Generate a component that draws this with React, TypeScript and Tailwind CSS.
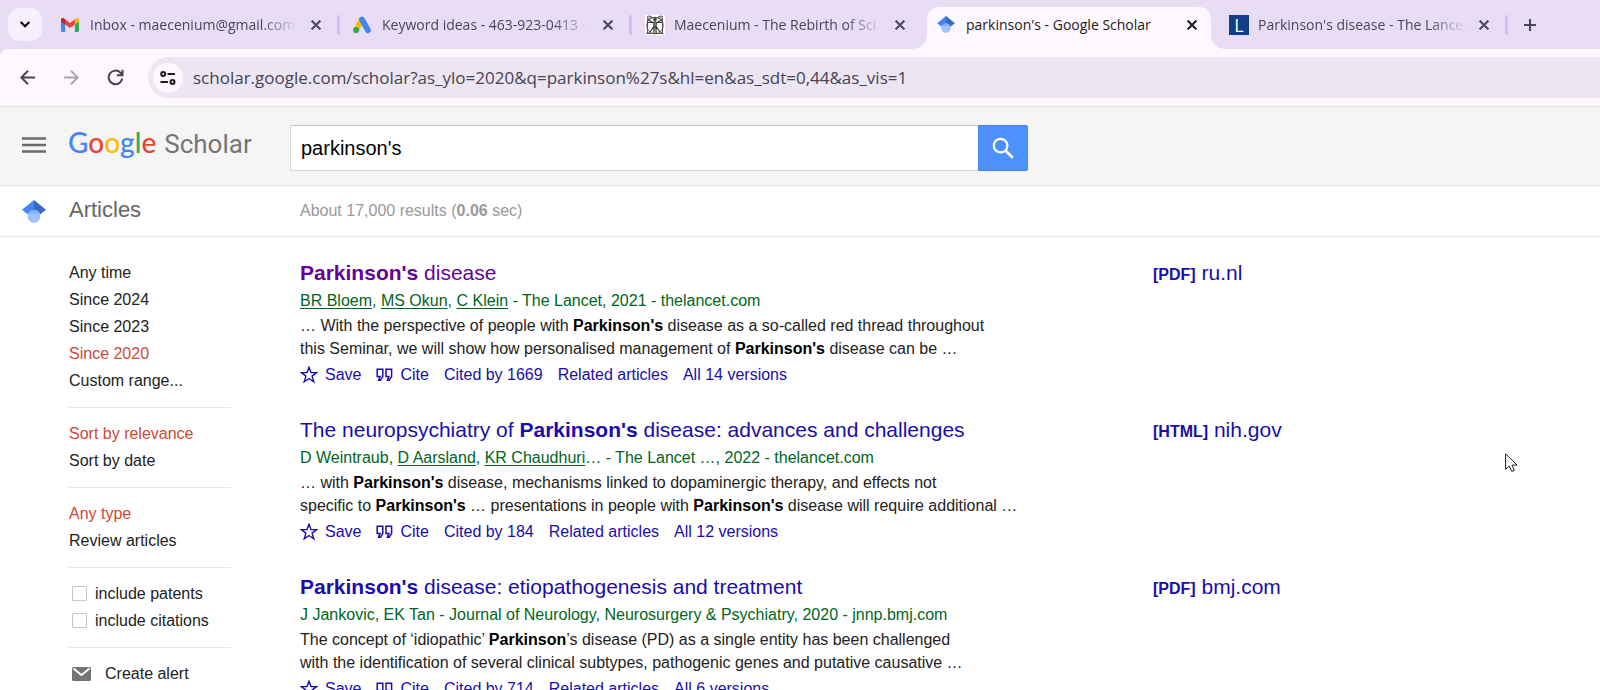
import { useState } from "react";
import type { ReactNode } from "react";

type Tab = {
    title: string;
    icon: ReactNode;
    active?: boolean;
    separator?: boolean;
};

type Result = {
    title: ReactNode;
    visited?: boolean;
    meta: ReactNode;
    snippet: ReactNode;
    cited: number;
    versions: number;
    format: string;
    host: string;
};

function GmailIcon() {
    return (
        <svg viewBox="0 0 18 14" className="w-[18px] h-[14px]">
            <path d="M0 2.2V12.6C0 13.4.6 14 1.3 14H4.1V6.1L2 2z" fill="#4285f4" />
            <path d="M18 2.2V12.6c0 .8-.6 1.4-1.3 1.4h-2.8V6.1L16 2z" fill="#34a853" />
            <path d="M13.9 1.3v5.1L18 3.3V1.9C18 .2 16.1-.5 14.9.5z" fill="#fbbc04" />
            <path d="M4.1 6.4V1.3L9 5l4.9-3.7v5.1L9 10.1z" fill="#ea4335" />
            <path d="M0 1.9v1.4l4.1 3.1V1.3L3.1.5C1.9-.5 0 .2 0 1.9z" fill="#c5221f" />
        </svg>
    );
}

function AdsIcon() {
    return (
        <svg viewBox="0 0 18 18" className="w-[18px] h-[18px]">
            <path d="M3.2 14L8.6 4.2" stroke="#fbbc04" strokeWidth="5.6" />
            <path d="M9 3.6l6 10.6" stroke="#4285f4" strokeWidth="5.8" strokeLinecap="round" />
            <circle cx="3.1" cy="14" r="3.1" fill="#34a853" />
        </svg>
    );
}

function VitruvianIcon() {
    return (
        <svg viewBox="0 0 20 20" className="w-5 h-5 bg-white" fill="none" stroke="#3c3c3c">
            <rect x="2.5" y="3" width="15" height="15.5" strokeWidth=".8" />
            <circle cx="10" cy="10.5" r="8.3" strokeWidth=".8" />
            <path d="M2 2c2-1.6 4-.8 5 .3M18 2c-2-1.6-4-.8-5 .3M1.5 18.5l3-1M18.5 18.5l-3-1" strokeWidth="1" />
            <circle cx="10" cy="4.8" r="1.3" fill="#3c3c3c" />
            <path d="M2.5 7.5H17.5M3 4.5l5.5 3.5M17 4.5l-5.5 3.5" strokeWidth="1.2" />
            <path d="M8.4 7h3.2l-.4 5H8.8z" fill="#777" strokeWidth=".8" />
            <path d="M9.2 11.5l-.4 6.5M10.8 11.5l.4 6.5M8.8 11.5L5 17M11.2 11.5L15 17" strokeWidth="1.3" />
        </svg>
    );
}

function ScholarIcon({ className }: { className: string }) {
    return (
        <svg viewBox="0 0 24 23" className={className}>
            <path d="M12 0L0 9.8l6 4.7h6z" fill="#4285f4" />
            <path d="M12 0l12 9.8-6 4.7h-6z" fill="#356ac3" />
            <circle cx="12" cy="16.4" r="6.4" fill="#a0c3ff" />
            <path d="M6.3 13.5a6.4 6.4 0 0 1 11.4 0z" fill="#82b1ff" />
        </svg>
    );
}

function LancetIcon() {
    return (
        <span className="w-5 h-5 bg-[#123f87] text-white text-lg font-medium leading-5 text-center font-['Open_Sans',sans-serif]">L</span>
    );
}

function CloseIcon() {
    return (
        <svg viewBox="0 0 10 10" className="w-[10px] h-[10px]" stroke="currentColor" strokeWidth="2">
            <path d="M.6.6l8.8 8.8M9.4.6L.6 9.4" />
        </svg>
    );
}

function StarIcon() {
    return (
        <svg viewBox="0 0 18 18" className="w-[18px] h-[18px]" fill="none" stroke="currentColor" strokeWidth="1.4">
            <path d="M9 1.2l2 5.4h5.6l-4.5 3.5 1.7 5.7L9 12.5l-4.8 3.3 1.7-5.7L1.4 6.6H7z" />
        </svg>
    );
}

function QuoteIcon() {
    return (
        <svg viewBox="0 0 17 14" className="w-[17px] h-[14px]" fill="none" stroke="currentColor" strokeWidth="1.5">
            <path d="M1.2 1.2h5.6v7.4L4.4 12.2H2.6l1.5-3.8H1.2z" />
            <path d="M10 1.2h5.6v7.4l-2.4 3.6h-1.8l1.5-3.8H10z" />
        </svg>
    );
}

const tabs: Tab[] = [
    { title: "Inbox - maecenium@gmail.com", icon: <GmailIcon />, separator: true },
    { title: "Keyword ideas - 463-923-0413 -", icon: <AdsIcon />, separator: true },
    { title: "Maecenium - The Rebirth of Sci", icon: <VitruvianIcon /> },
    { title: "parkinson's - Google Scholar", icon: <ScholarIcon className="w-[18px] h-[17px]" />, active: true },
    { title: "Parkinson's disease - The Lancet", icon: <LancetIcon />, separator: true },
];

const filters = [
    { items: ["Any time", "Since 2024", "Since 2023", "Since 2020", "Custom range..."], selected: "Since 2020" },
    { items: ["Sort by relevance", "Sort by date"], selected: "Sort by relevance" },
    { items: ["Any type", "Review articles"], selected: "Any type" },
];

const results: Result[] = [
    {
        title: <><b>Parkinson's</b> disease</>,
        visited: true,
        meta: <><Author>BR Bloem</Author>, <Author>MS Okun</Author>, <Author>C Klein</Author> - The Lancet, 2021 - thelancet.com</>,
        snippet: <>… With the perspective of people with <B>Parkinson's</B> disease as a so-called red thread throughout<br />this Seminar, we will show how personalised management of <B>Parkinson's</B> disease can be …</>,
        cited: 1669,
        versions: 14,
        format: "[PDF]",
        host: "ru.nl",
    },
    {
        title: <>The neuropsychiatry of <b>Parkinson's</b> disease: advances and challenges</>,
        meta: <>D Weintraub, <Author>D Aarsland</Author>, <Author>KR Chaudhuri</Author>… - The Lancet …, 2022 - thelancet.com</>,
        snippet: <>… with <B>Parkinson's</B> disease, mechanisms linked to dopaminergic therapy, and effects not<br />specific to <B>Parkinson's</B> … presentations in people with <B>Parkinson's</B> disease will require additional …</>,
        cited: 184,
        versions: 12,
        format: "[HTML]",
        host: "nih.gov",
    },
    {
        title: <><b>Parkinson's</b> disease: etiopathogenesis and treatment</>,
        meta: <>J Jankovic, EK Tan - Journal of Neurology, Neurosurgery &amp; Psychiatry, 2020 - jnnp.bmj.com</>,
        snippet: <>The concept of ‘idiopathic’ <B>Parkinson</B>’s disease (PD) as a single entity has been challenged<br />with the identification of several clinical subtypes, pathogenic genes and putative causative …</>,
        cited: 714,
        versions: 6,
        format: "[PDF]",
        host: "bmj.com",
    },
];

function Author({ children }: { children: ReactNode }) {
    return <a href="#" className="underline underline-offset-2">{children}</a>;
}

function B({ children }: { children: ReactNode }) {
    return <b className="text-black">{children}</b>;
}

function TabStrip() {
    return (
        <div className="flex items-center shrink-0 h-[49px] bg-[#e9ddf5] text-[#4a4459] font-['Open_Sans',sans-serif]">
            <button aria-label="Search tabs" className="flex items-center justify-center shrink-0 w-[34px] h-[33px] ml-2 mr-1.5 rounded-xl bg-[#f8f0fe] text-black">
                <svg viewBox="0 0 10 7" className="w-[10px] h-[7px]" fill="none" stroke="currentColor" strokeWidth="2"><path d="M.7 1l4.3 4.3L9.3 1" /></svg>
            </button>
            {tabs.map((tab) => (
                <div key={tab.title} className={`relative flex shrink-0 items-center w-[292px] pl-[13px] ${tab.active ? "h-[42px] self-end pb-[7px] text-[#1d1b20]" : "h-[49px]"}`}>
                    {tab.active && (
                        <svg viewBox="0 0 314 42" className="absolute -left-3 bottom-0 w-[314px] h-[42px]" fill="#fdf7ff">
                            <path d="M0 42C9 42 15 36 15 27V12C15 5 20 0 27 0H287c7 0 12 5 12 12V27c0 9 6 15 15 15z" />
                        </svg>
                    )}
                    <span className="relative flex items-center justify-start w-[29px]">{tab.icon}</span>
                    <span className={`relative w-[208px] overflow-hidden whitespace-nowrap text-sm ${tab.active ? "" : "[mask-image:linear-gradient(to_right,black_82%,transparent)]"}`}>{tab.title}</span>
                    <button aria-label="Close tab" className="relative flex items-center justify-center w-5 h-5 ml-2"><CloseIcon /></button>
                    {tab.separator && <span className="w-[3px] h-5 ml-auto rounded-full bg-[#d3bcff]" />}
                </div>
            ))}
            <button aria-label="New tab" className="flex items-center justify-center w-8 h-8 ml-1.5">
                <svg viewBox="0 0 12 12" className="w-3 h-3" stroke="currentColor" strokeWidth="2"><path d="M6 0v12M0 6h12" /></svg>
            </button>
        </div>
    );
}

function Toolbar() {
    return (
        <div className="shrink-0 bg-[#e9ddf5]">
            <div className="flex items-center h-[58px] rounded-tl-lg border-b border-[#e4dfe7] bg-[#fdf7ff] text-[#474254] font-['Open_Sans',sans-serif]">
                <button aria-label="Back" className="ml-5">
                    <svg viewBox="0 0 15 15" className="w-[15px] h-[15px]" fill="none" stroke="currentColor" strokeWidth="2"><path d="M15 7.5H1.5M8 .8L1.3 7.5 8 14.2" /></svg>
                </button>
                <button aria-label="Forward" className="ml-[29px] text-[#aaa5ae]">
                    <svg viewBox="0 0 15 15" className="w-[15px] h-[15px]" fill="none" stroke="currentColor" strokeWidth="2"><path d="M0 7.5h13.5M7 .8l6.7 6.7L7 14.2" /></svg>
                </button>
                <button aria-label="Reload" className="ml-[28px]">
                    <svg viewBox="0 0 17 17" className="w-[17px] h-[17px]" fill="none" stroke="currentColor" strokeWidth="2"><path d="M15.2 9.5A6.8 6.8 0 1 1 13.4 3.7L15 5.6M15.5.8v5.4h-5.6" /></svg>
                </button>
                <div className="flex flex-1 items-center h-[41px] ml-6 pl-[5px] rounded-l-full bg-[#ebe6f1]">
                    <button aria-label="View site information" className="flex items-center justify-center w-[30px] h-[30px] rounded-full bg-[#fdf7ff] text-[#1d1b20]">
                        <svg viewBox="0 0 16 14" className="w-4 h-[14px]" fill="none" stroke="currentColor" strokeWidth="2">
                            <circle cx="3.2" cy="3" r="2" />
                            <path d="M7.5 3H15M.5 11H8" />
                            <circle cx="12.5" cy="11" r="2" />
                        </svg>
                    </button>
                    <input aria-label="Address" className="flex-1 ml-[10px] bg-transparent text-[17px] outline-none" defaultValue="scholar.google.com/scholar?as_ylo=2020&q=parkinson%27s&hl=en&as_sdt=0,44&as_vis=1" />
                </div>
            </div>
        </div>
    );
}

function Header() {
    const [query, setQuery] = useState("parkinson's");

    return (
        <header className="flex items-start shrink-0 h-[79px] pt-[18px] bg-[#f5f5f5] border-b border-[#e5e5e5]">
            <div className="flex items-center w-[290px] h-10 pl-[22px]">
                <button aria-label="Menu">
                    <svg viewBox="0 0 24 16" className="w-6 h-4" stroke="#6b6b6b" strokeWidth="2.4"><path d="M0 1.5h24M0 8h24M0 14.5h24" /></svg>
                </button>
                <a href="#" className="flex items-baseline mb-1 ml-[22px] gap-2">
                    <span className="font-['Lato',sans-serif] font-medium text-[28px] leading-8">
                        <span className="text-[#4285f4]">G</span>
                        <span className="text-[#ea4335]">o</span>
                        <span className="text-[#fbbc05]">o</span>
                        <span className="text-[#4285f4]">g</span>
                        <span className="text-[#34a853]">l</span>
                        <span className="text-[#ea4335]">e</span>
                    </span>
                    <span className="font-['Roboto',sans-serif] text-[26px] leading-8 text-[#757575]">Scholar</span>
                </a>
            </div>
            <form className="flex w-[738px] h-[46px]" onSubmit={(e) => e.preventDefault()}>
                <input
                    aria-label="Search"
                    className="flex-1 min-w-0 pl-[10px] rounded-l-xs bg-white border border-r-0 border-[#d5d5d5] border-t-[#c4c4c4] text-xl text-black outline-none"
                    value={query}
                    onChange={(e) => setQuery(e.target.value)}
                />
                <button aria-label="Search" className="flex items-center justify-center w-[50px] rounded-r-xs bg-[#4d90fe] border border-[#3f83f3]">
                    <svg viewBox="0 0 22 22" className="w-[22px] h-[22px]" fill="none" stroke="#fff" strokeWidth="2.2"><circle cx="8.6" cy="8.6" r="6.8" /><path d="M13.4 13.4l7.4 7.4" strokeWidth="2.8" /></svg>
                </button>
            </form>
        </header>
    );
}

function Sidebar() {
    return (
        <nav className="w-[162px] shrink-0 leading-[27px]">
            {filters.map((group) => (
                <ul key={group.selected} className="pb-[13px] mb-3 border-b border-[#e8e8e8]">
                    {group.items.map((item) => (
                        <li key={item}>
                            <a href="#" className={item === group.selected ? "text-[#d14836]" : "text-[#222]"}>{item}</a>
                        </li>
                    ))}
                </ul>
            ))}
            <div className="pb-[13px] mb-3 border-b border-[#e8e8e8]">
                {["include patents", "include citations"].map((label) => (
                    <label key={label} className="flex items-center pl-[3px] gap-2">
                        <input type="checkbox" className="appearance-none w-[15px] h-[15px] border border-[#c6c6c6] rounded-[1px] bg-white" />
                        {label}
                    </label>
                ))}
            </div>
            <a href="#" className="flex items-center pl-[3px] gap-[14px]">
                <svg viewBox="0 0 19 14" className="w-[19px] h-[14px]"><rect width="19" height="14" rx="1.5" fill="#757575" /><path d="M1.5 1.5l8 6.5 8-6.5" fill="none" stroke="#fff" strokeWidth="1.8" /></svg>
                Create alert
            </a>
        </nav>
    );
}

function ResultItem({ result }: { result: Result }) {
    return (
        <article className="flex mb-[26px]">
            <div className="w-[853px] shrink-0">
                <h3 className="text-[21px] leading-7">
                    <a href="#" className={result.visited ? "text-[#609]" : "text-[#1a0dab]"}>{result.title}</a>
                </h3>
                <div className="leading-[27px] text-[#006621]">{result.meta}</div>
                <p className="leading-[23px]">{result.snippet}</p>
                <div className="flex items-center gap-[15px] leading-[30px] text-[#1a0dab]">
                    <button className="flex items-center gap-[7px]"><StarIcon />Save</button>
                    <button className="flex items-center gap-[7px]"><QuoteIcon />Cite</button>
                    <a href="#">Cited by {result.cited}</a>
                    <a href="#">Related articles</a>
                    <a href="#">All {result.versions} versions</a>
                </div>
            </div>
            <a href="#" className="text-[21px] leading-7 text-[#1a0dab]"><b className="text-base">{result.format}</b> {result.host}</a>
        </article>
    );
}

export default function App() {
    return (
        <div className="relative flex flex-col h-screen overflow-hidden bg-white text-base text-[#222] font-['Liberation_Sans',Arial,sans-serif]">
            <TabStrip />
            <Toolbar />
            <Header />
            <div className="flex items-center shrink-0 h-[51px] pl-[22px] border-b border-[#e5e5e5]">
                <ScholarIcon className="w-6 h-[23px]" />
                <h1 className="w-[231px] ml-[23px] pb-1 text-[22px] text-[#666]">Articles</h1>
                <div className="text-[#999]">About 17,000 results (<b>0.06</b> sec)</div>
            </div>
            <main className="flex gap-[69px] pt-[22px] pl-[69px]">
                <Sidebar />
                <div>
                    {results.map((result) => (
                        <ResultItem key={result.host} result={result} />
                    ))}
                </div>
            </main>
            {/* mouse pointer */}
            <svg viewBox="0 0 13 20" className="absolute left-[1505px] top-[453px] w-[13px] h-5" fill="#fff" stroke="#222" strokeWidth="1">
                <path d="M.6.8v15.6l3.6-3.3 2.6 5.4 2.6-1.2-2.5-5.2h5.2z" />
            </svg>
        </div>
    );
}
